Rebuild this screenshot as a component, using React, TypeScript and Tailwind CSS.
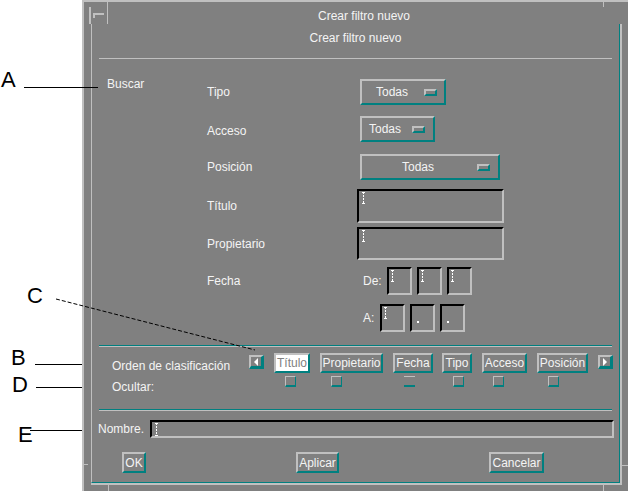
import React from 'react';

const raised =
  'border-2 border-t-[#c0c0c0] border-l-[#c0c0c0] border-b-[#008080] border-r-[#008080]';
const sunken =
  'border-2 border-t-black border-l-black border-b-[#c0c0c0] border-r-[#c0c0c0]';

function IBeam({ h = 12 }: { h?: number }) {
  return (
    <svg width="3" height={h} className="block">
      <line x1="1.5" y1="0" x2="1.5" y2={h} stroke="#ffffff" strokeWidth="1" strokeDasharray="2 1" />
      <line x1="0" y1="0.5" x2="3" y2="0.5" stroke="#ffffff" strokeWidth="1" />
      <line x1="0" y1={h - 0.5} x2="3" y2={h - 0.5} stroke="#ffffff" strokeWidth="1" />
    </svg>
  );
}

function OptionMenu({ boxW, textMl, indMl }: { boxW: string; textMl: string; indMl: string }) {
  return (
    <div className={`${boxW} h-[26px] ml-[3px] flex items-center ${raised}`}>
      <span className={`${textMl} w-[34px] whitespace-nowrap`}>Todas</span>
      <span className={`${indMl} w-[13px] h-[7px] ${raised}`} />
    </div>
  );
}

function SortItem({ label, w, ml, selected, fechaCb }: { label: string; w: string; ml: string; selected?: boolean; fechaCb?: boolean }) {
  return (
    <div className={`${ml} flex flex-col`}>
      <div
        className={`${w} h-[20px] flex items-center justify-center whitespace-nowrap ${raised} ${
          selected ? 'bg-white text-[#808080]' : ''
        }`}
      >
        {label}
      </div>
      {fechaCb ? (
        <div className="mt-[3px] ml-[11px] w-[11px] h-[11px] border-t border-t-[#c0c0c0] border-b-2 border-b-[#008080]" />
      ) : (
        <div className="mt-[3px] ml-[11px] w-[11px] h-[11px] border-t border-l border-t-[#c0c0c0] border-l-[#c0c0c0] border-b-2 border-b-[#008080] border-r border-r-[#008080]" />
      )}
    </div>
  );
}

function ArrowBtn({ dir, ml }: { dir: 'left' | 'right'; ml: string }) {
  return (
    <div className={`${ml} mt-[2px] w-[15px] h-[14px] border-t-2 border-l-2 border-t-[#c0c0c0] border-l-[#c0c0c0] border-b-[3px] border-r-[3px] border-b-[#008080] border-r-[#008080] flex items-center pl-[2px]`}>
      <svg width="6" height="8" className="block">
        {dir === 'left' ? (
          <polygon points="5,0 5,8 1,4" fill="#ffffff" />
        ) : (
          <polygon points="1,0 1,8 5,4" fill="#ffffff" />
        )}
      </svg>
    </div>
  );
}

function DateField({ w, cursor }: { w: string; cursor: 'beam' | 'dot' }) {
  return (
    <div className={`${w} h-[28px] ${sunken} pl-[2px] pt-[1px]`}>
      {cursor === 'beam' ? (
        <IBeam h={12} />
      ) : (
        <div className="mt-[14px] ml-[3px] w-[2px] h-[2px] bg-white" />
      )}
    </div>
  );
}

function Field({ h }: { h: string }) {
  return (
    <div className={`w-[147px] ${h} ${sunken} pl-[3px] pt-[1px]`}>
      <IBeam h={12} />
    </div>
  );
}

function BottomBtn({ label, w, ml }: { label: string; w: string; ml: string }) {
  return (
    <div className={`${ml} ${w} h-[21px] flex items-center justify-center whitespace-nowrap ${raised}`}>
      {label}
    </div>
  );
}

export default function App() {
  return (
    <div className="relative w-[628px] h-[491px] bg-white flex overflow-hidden font-['Liberation_Sans',Arial,sans-serif]">
      {/* annotation margin */}
      <div className="relative w-[82px] shrink-0 text-black text-[22px] leading-[22px]">
        <span className="absolute left-[1px] top-[69px]">A</span>
        <span className="absolute left-[27px] top-[285px]">C</span>
        <span className="absolute left-[11px] top-[347px]">B</span>
        <span className="absolute left-[12px] top-[374px]">D</span>
        <span className="absolute left-[18px] top-[424px]">E</span>
      </div>

      {/* window */}
      <div className="relative w-[546px] h-[491px] shrink-0 bg-[#808080] border-l-2 border-t-2 border-[#c0c0c0] flex flex-col text-[12px] leading-[14px] text-[#f4f4f4]">
        {/* title bar */}
        <div className="h-[22px] flex shrink-0">
          <div className="w-[24px] h-full border-r border-[#c0c0c0]">
            <svg width="23" height="22" className="block">
              <rect x="5" y="5" width="2" height="17" fill="#c0c0c0" />
              <rect x="9" y="11" width="11" height="2" fill="#c0c0c0" />
              <rect x="9" y="11" width="2" height="5" fill="#c0c0c0" />
            </svg>
          </div>
          <div className="flex-1 text-center pt-[7px]">Crear filtro nuevo</div>
          <div className="w-[8px]" />
        </div>

        {/* frame */}
        <div className="ml-[7px] mr-[6px] h-[461px] border-r-2 border-b-2 border-[#c0c0c0]">
          <div className="h-[459px] border-l border-l-[#c0c0c0] border-r border-r-[#008080] border-b border-b-[#008080] flex flex-col">
            <div className="pt-[7px] text-center">Crear filtro nuevo</div>
            <div className="mt-[13px] mx-[7px] h-px bg-[#c0c0c0]" />

            {/* search section */}
            <div className="flex">
              <div className="w-[115px] pl-[15px] pt-[18px]">Buscar</div>
              <div className="flex flex-col pt-[20px]">
                <div className="h-[26px] flex items-center">
                  <div className="w-[150px]">Tipo</div>
                  <OptionMenu boxW="w-[86px]" textMl="ml-[14px]" indMl="ml-[14px]" />
                </div>
                <div className="mt-[11px] h-[26px] flex items-center">
                  <div className="w-[150px] mt-[4px]">Acceso</div>
                  <OptionMenu boxW="w-[75px]" textMl="ml-[7px]" indMl="ml-[9px]" />
                </div>
                <div className="mt-[12px] h-[26px] flex items-center">
                  <div className="w-[150px]">Posición</div>
                  <OptionMenu boxW="w-[140px]" textMl="ml-[40px]" indMl="ml-[41px]" />
                </div>
                <div className="mt-[9px] h-[34px] flex items-center">
                  <div className="w-[150px]">Título</div>
                  <Field h="h-[34px]" />
                </div>
                <div className="mt-[4px] h-[33px] flex items-center">
                  <div className="w-[150px]">Propietario</div>
                  <Field h="h-[33px]" />
                </div>
                <div className="mt-[7px] h-[28px] flex items-center">
                  <div className="w-[150px]">Fecha</div>
                  <div className="ml-[6px] w-[19px]">De:</div>
                  <div className="ml-[5px] flex gap-[5px]">
                    <DateField w="w-[25px]" cursor="beam" />
                    <DateField w="w-[25px]" cursor="beam" />
                    <DateField w="w-[25px]" cursor="beam" />
                  </div>
                </div>
                <div className="mt-[9px] h-[28px] flex items-center">
                  <div className="w-[150px]" />
                  <div className="ml-[6px] w-[12px]">A:</div>
                  <div className="ml-[5px] flex gap-[5px]">
                    <DateField w="w-[25px]" cursor="beam" />
                    <DateField w="w-[25px]" cursor="dot" />
                    <DateField w="w-[25px]" cursor="dot" />
                  </div>
                </div>
              </div>
            </div>

            <div className="mt-[13px] mx-[7px] h-px bg-[#008080]" />
            <div className="mx-[7px] h-px bg-[#c0c0c0]" />

            {/* sort section */}
            <div className="mt-[6px] flex">
              <div className="w-[157px] pl-[20px] flex flex-col">
                <div className="mt-[6px] whitespace-nowrap">Orden de clasificación</div>
                <div className="mt-[7px]">Ocultar:</div>
              </div>
              <ArrowBtn dir="left" ml="ml-0" />
              <SortItem label="Título" w="w-[36px]" ml="ml-[10px]" selected />
              <SortItem label="Propietario" w="w-[63px]" ml="ml-[10px]" />
              <SortItem label="Fecha" w="w-[40px]" ml="ml-[10px]" fechaCb />
              <SortItem label="Tipo" w="w-[30px]" ml="ml-[9px]" />
              <SortItem label="Acceso" w="w-[45px]" ml="ml-[10px]" />
              <SortItem label="Posición" w="w-[51px]" ml="ml-[10px]" />
              <ArrowBtn dir="right" ml="ml-[10px]" />
            </div>

            <div className="mt-[15px] mx-[7px] h-px bg-[#008080]" />
            <div className="mx-[7px] h-px bg-[#c0c0c0]" />

            {/* name row */}
            <div className="mt-[9px] h-[18px] flex items-center">
              <div className="w-[58px] pl-[6px] whitespace-nowrap">Nombre.</div>
              <div className={`w-[464px] h-[18px] ${sunken} pl-[3px] pt-[1px]`}>
                <IBeam h={13} />
              </div>
            </div>

            {/* buttons */}
            <div className="mt-[14px] flex">
              <BottomBtn label="OK" w="w-[24px]" ml="ml-[30px]" />
              <BottomBtn label="Aplicar" w="w-[43px]" ml="ml-[150px]" />
              <BottomBtn label="Cancelar" w="w-[55px]" ml="ml-[150px]" />
            </div>
          </div>
        </div>

        {/* resize handle ticks */}
        <span className="absolute left-[519px] top-[-2px] w-px h-[7px] bg-[#c0c0c0]" />
        <span className="absolute left-[24px] top-[483px] w-px h-[6px] bg-[#c0c0c0]" />
        <span className="absolute left-[519px] top-[483px] w-px h-[6px] bg-[#c0c0c0]" />
        <span className="absolute left-0 top-[462px] w-[4px] h-px bg-[#c0c0c0]" />
        <span className="absolute left-[538px] top-[463px] w-[6px] h-px bg-[#c0c0c0]" />
      </div>

      {/* callout lines */}
      <svg className="absolute inset-0 pointer-events-none" width="628" height="491">
        <line x1="24" y1="87.5" x2="98" y2="87.5" stroke="#000" strokeWidth="1" />
        <line x1="35" y1="364.5" x2="82" y2="364.5" stroke="#000" strokeWidth="1" />
        <line x1="36" y1="387.5" x2="82" y2="387.5" stroke="#000" strokeWidth="1" />
        <line x1="30" y1="430.5" x2="82" y2="430.5" stroke="#000" strokeWidth="1" />
        <line x1="56" y1="299" x2="255" y2="350" stroke="#000" strokeWidth="1" strokeDasharray="4 2" />
      </svg>
    </div>
  );
}
